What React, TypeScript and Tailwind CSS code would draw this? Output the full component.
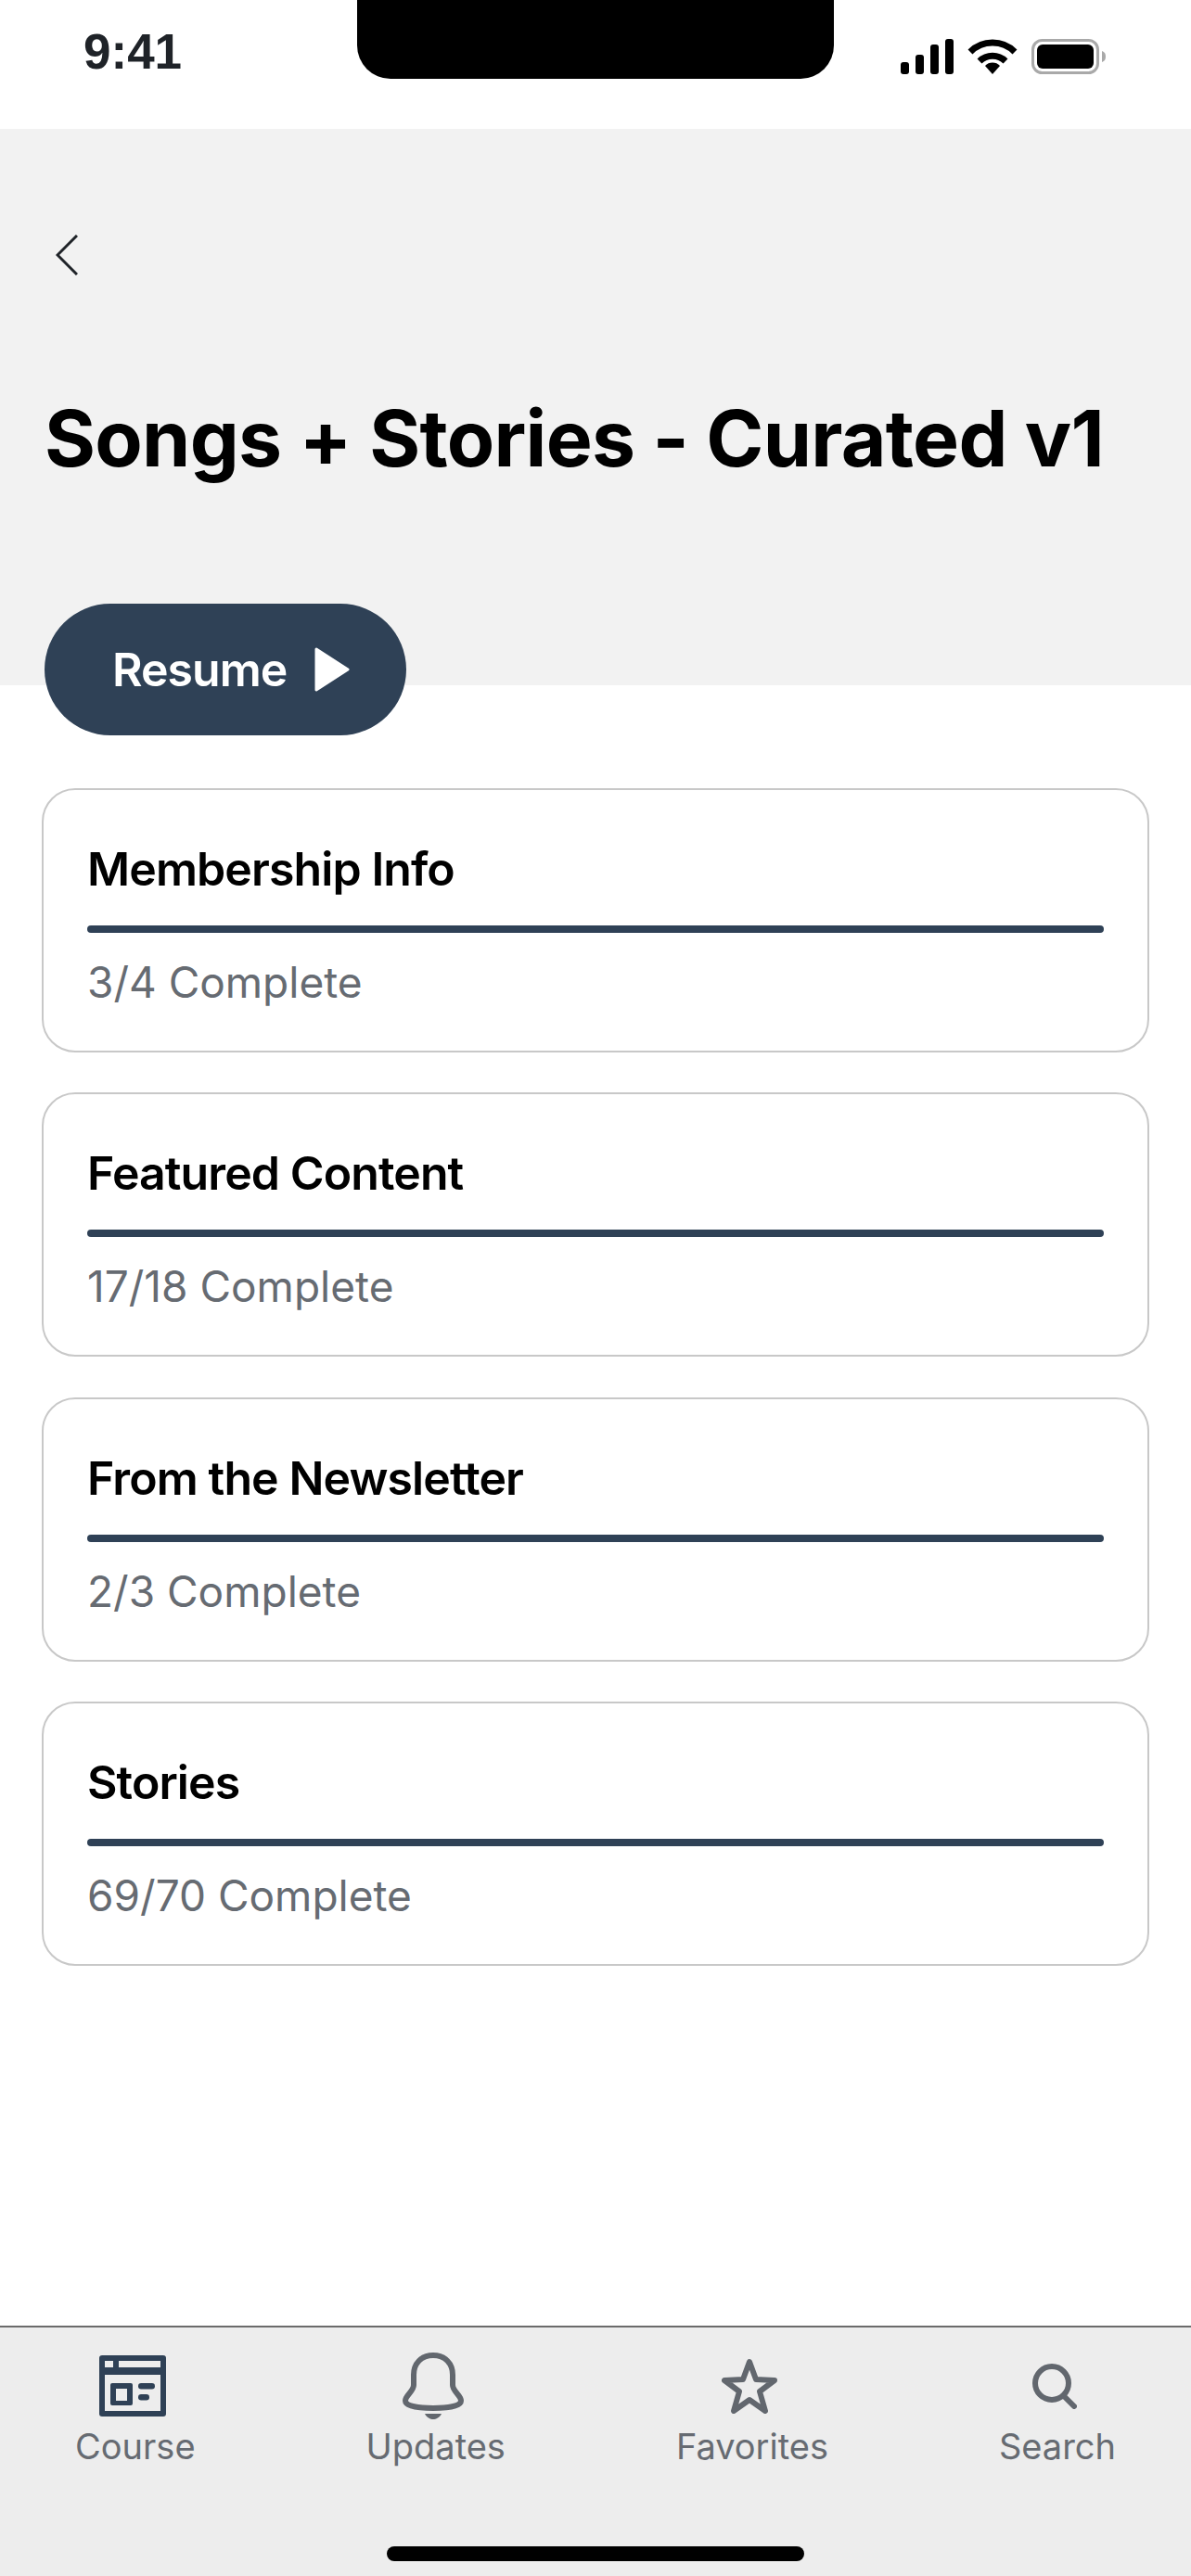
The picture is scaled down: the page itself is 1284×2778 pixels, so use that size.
import React from 'react';

const sections = [
  { title: 'Membership Info', progress: '3/4 Complete' },
  { title: 'Featured Content', progress: '17/18 Complete' },
  { title: 'From the Newsletter', progress: '2/3 Complete' },
  { title: 'Stories', progress: '69/70 Complete' },
];

const StatusIcons: React.FC = () => (
  <div className="flex items-center gap-[15px]">
    <svg width="57" height="38" viewBox="0 0 57 38" fill="#000">
      <rect x="0" y="25" width="9" height="13" rx="3" />
      <rect x="16" y="17" width="9" height="21" rx="3" />
      <rect x="32" y="6" width="9" height="32" rx="3" />
      <rect x="48" y="0" width="9" height="38" rx="3" />
    </svg>
    <svg width="54" height="38" viewBox="0 0 54 38" fill="none" stroke="#000" strokeWidth="7">
      <path d="M3 14 A34 34 0 0 1 51 14" />
      <path d="M13 24 A20 20 0 0 1 41 24" />
      <path d="M19 29 A11 11 0 0 1 35 29 L27 38 Z" fill="#000" stroke="none" />
    </svg>
    <svg width="80" height="38" viewBox="0 0 80 38" fill="none">
      <rect x="1.5" y="1.5" width="70" height="35" rx="10" stroke="#a9a9a9" strokeWidth="3" />
      <rect x="6" y="6" width="61" height="26" rx="6" fill="#000" />
      <path d="M76 13 C79 14 80 16 80 19 C80 22 79 24 76 25 Z" fill="#a9a9a9" />
    </svg>
  </div>
);

const CourseIcon = () => (
  <svg width="72" height="66" viewBox="0 0 72 66">
    <rect width="72" height="66" rx="3" fill="#2f4156" />
    <rect x="6" y="6" width="9" height="7" fill="#ededed" />
    <rect x="21" y="6" width="45" height="7" fill="#ededed" />
    <rect x="6" y="21" width="60" height="39" fill="#ededed" />
    <rect x="12" y="30" width="24" height="24" rx="2" fill="#2f4156" />
    <rect x="18" y="36" width="12" height="13" fill="#ededed" />
    <rect x="42" y="30" width="18" height="6.5" rx="3.2" fill="#2f4156" />
    <rect x="42" y="42" width="12" height="6.5" rx="3.2" fill="#2f4156" />
  </svg>
);

const BellIcon = () => (
  <svg width="66" height="72" viewBox="0 0 66 72" fill="none" stroke="#62676e" strokeWidth="6">
    <path d="M33 3 C20 3 12 12 12 24 V35 C12 42 3 46 3 52 C3 58 18 60 33 60 C48 60 63 58 63 52 C63 46 54 42 54 35 V24 C54 12 46 3 33 3 Z" />
    <path d="M24 66 H42 C40 70 36 72 33 72 C30 72 26 70 24 66 Z" fill="#62676e" stroke="none" />
  </svg>
);

const StarIcon = () => (
  <svg width="60" height="60" viewBox="0 0 60 60" fill="none" stroke="#62676e" strokeWidth="6" strokeLinejoin="round">
    <path d="M30 4 L37 23 L57 24 L41 36 L47 57 L30 45 L13 57 L19 36 L3 24 L23 23 Z" />
  </svg>
);

const SearchIcon = () => (
  <svg width="48" height="49" viewBox="0 0 48 49" fill="none" stroke="#62676e" strokeWidth="6" strokeLinecap="round">
    <circle cx="21" cy="21" r="18" />
    <path d="M34 35 L45 46" />
  </svg>
);

const tabs = [
  { label: 'Course', icon: <CourseIcon /> },
  { label: 'Updates', icon: <BellIcon /> },
  { label: 'Favorites', icon: <StarIcon /> },
  { label: 'Search', icon: <SearchIcon /> },
];

export default function App() {
  return (
    <div className="flex h-[2778px] w-[1284px] flex-col overflow-hidden bg-white font-['Inter',sans-serif]">
      <div className="flex h-[139px] items-start pl-[90px] pr-[92px]">
        <span className="mt-[26px] w-[295px] font-['Liberation_Sans',sans-serif] text-[53px] leading-[60px] font-bold text-[#1f2328]">9:41</span>
        <div className="h-[85px] w-[514px] rounded-b-[36px] bg-black" />
        <div className="mt-[42px] ml-auto">
          <StatusIcons />
        </div>
      </div>

      <header className="h-[600px] bg-[#f2f2f2] px-[48px]">
        <svg className="mt-[114px] ml-[12px] block" width="24" height="44" viewBox="0 0 24 44" fill="none" stroke="#1f2328" strokeWidth="3">
          <path d="M23 1 L2 22 L23 43" />
        </svg>
        <h1 className="mt-[126px] text-[84px] leading-[100px] font-bold tracking-[-0.7px] whitespace-nowrap text-black">Songs + Stories - Curated v1</h1>
      </header>

      <button type="button" className="mt-[-88px] ml-[48px] flex h-[142px] w-[390px] items-center gap-[30px] rounded-full bg-[#2f4156] pl-[73px]">
        <span className="text-[50px] leading-[60px] font-semibold tracking-[-1px] text-white">Resume</span>
        <svg width="38" height="48" viewBox="0 0 38 48" fill="#fff" stroke="#fff" strokeWidth="3" strokeLinejoin="round">
          <path d="M2 2 L36 24 L2 46 Z" />
        </svg>
      </button>

      <div className="mt-[57px] flex flex-col gap-[43.4px] pr-[45px] pl-[45px]">
        {sections.map((s) => (
          <div key={s.title} className="h-[285px] rounded-[36px] border-2 border-[#c8c8c8] px-[47px] pt-[55px]">
            <div className="text-[50px] leading-[60px] font-semibold tracking-[-0.9px] text-black">{s.title}</div>
            <div className="mt-[31px] h-[8px] rounded-full bg-[#2f4156]" />
            <div className="mt-[23px] text-[46px] leading-[60px] text-[#666b72]">{s.progress}</div>
          </div>
        ))}
      </div>

      <nav className="relative mt-auto h-[270px] border-t-2 border-[#6b6b6b] bg-[#ededed]">
        <div className="flex justify-between px-[81px] pt-[26px]">
          {tabs.map((t) => (
            <div key={t.label} className="flex flex-col items-center">
              <div className="flex h-[74px] items-center justify-center pr-[5px]">{t.icon}</div>
              <span className="mt-[4px] text-[38px] leading-[48px] text-[#666b72]">{t.label}</span>
            </div>
          ))}
        </div>
        <div className="absolute bottom-[16px] left-[417px] h-[16px] w-[450px] rounded-full bg-black" />
      </nav>
    </div>
  );
}
